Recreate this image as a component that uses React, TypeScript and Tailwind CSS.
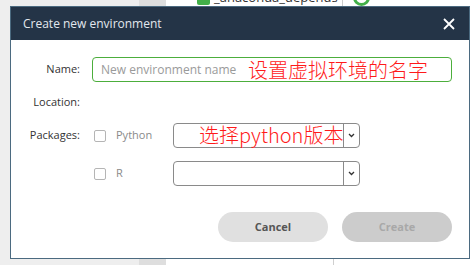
import React from "react";

function Checkbox() {
  return <span className="block w-[12px] h-[12px] border border-[#b5b5b5] rounded-[2px] bg-white" />;
}

function SelectBox({ note }: { note?: string }) {
  return (
    <div className="relative flex h-[25px] w-[187px] border border-[#8a8a8a] rounded-[4px] bg-white">
      <div className="flex-1" />
      <div className="w-[16px] border-l border-[#8a8a8a] flex items-center justify-center">
        <svg width="7" height="5" viewBox="0 0 7 5">
          <path d="M1 1 L3.5 3.5 L6 1" stroke="#333" strokeWidth="1.3" fill="none" />
        </svg>
      </div>
      {note && (
        <span className="absolute left-[25px] top-[-3px] text-[20px] font-light leading-[28px] text-[#ff1a1a] whitespace-nowrap [font-family:'Noto_Sans_CJK_SC','Noto_Sans',sans-serif]">
          {note}
        </span>
      )}
    </div>
  );
}

export default function App() {
  return (
    <div className="relative w-[470px] h-[265px] overflow-hidden [font-family:'Open_Sans','Noto_Sans',sans-serif]">
      {/* background app */}
      <div className="flex h-full">
        <div className="w-[139px] bg-[#eeeeee]" />
        <div className="w-[27px] bg-[#dedede]" />
        <div className="flex-1 bg-white flex flex-col justify-between">
          <div className="flex items-center h-[18px] -mt-[12px] pl-[31px]">
            <span className="w-[13px] h-[15px] bg-[#43b049] rounded-[2px]" />
            <span className="ml-[4px] text-[13px] text-[#333] leading-none">_anaconda_depends</span>
            <span className="ml-[4px] w-px h-[18px] bg-[#ccc]" />
            <span className="ml-[10px] w-[17px] h-[17px] rounded-full border-[3px] border-[#43b049]" />
          </div>
          <div className="h-[7px] ml-[167px] w-px bg-[#cfcfcf]" />
        </div>
      </div>

      {/* dialog */}
      <div className="absolute left-[10px] top-[6px] w-[460px] h-[253px] border border-[#4b6a80] bg-white flex flex-col">
        <div className="h-[33px] bg-[#243447] flex items-center justify-between pl-[12px] pr-[14px]">
          <span className="text-[12px] text-[#e3e8ee]">Create new environment</span>
          <svg width="12" height="12" viewBox="0 0 12 12">
            <path d="M1 1 L11 11 M11 1 L1 11" stroke="#ffffff" strokeWidth="1.8" />
          </svg>
        </div>

        <div className="flex flex-col pt-[17px] pr-[17px] text-[11px] text-[#333]">
          <div className="flex items-center h-[25px]">
            <span className="w-[69px] text-right">Name:</span>
            <div className="relative ml-[12px] flex-1 h-[25px] border border-[#4cae3c] rounded-[4px] flex items-center pl-[8px]">
              <span className="text-[12px] text-[#9a9a9a]">New environment name</span>
              <span className="absolute left-[155px] top-[-2px] text-[20px] font-light leading-[28px] text-[#ff1a1a] whitespace-nowrap [font-family:'Noto_Sans_CJK_SC','Noto_Sans',sans-serif]">
                设置虚拟环境的名字
              </span>
            </div>
          </div>

          <div className="flex items-center h-[25px] mt-[8px]">
            <span className="w-[69px] text-right">Location:</span>
          </div>

          <div className="flex items-center h-[25px] mt-[8px]">
            <span className="w-[69px] text-right">Packages:</span>
            <div className="ml-[14px] flex items-center w-[79px]">
              <Checkbox />
              <span className="ml-[10px] text-[11px] text-[#8a8a8a]">Python</span>
            </div>
            <SelectBox note="选择python版本" />
          </div>

          <div className="flex items-center h-[25px] mt-[13px]">
            <span className="w-[69px]" />
            <div className="ml-[14px] flex items-center w-[79px]">
              <Checkbox />
              <span className="ml-[10px] text-[11px] text-[#8a8a8a]">R</span>
            </div>
            <SelectBox />
          </div>

          <div className="flex justify-end gap-[14px] mt-[26px]">
            <button className="w-[110px] h-[30px] rounded-full bg-[#e0e0e0] text-[11px] font-bold text-[#555]">
              Cancel
            </button>
            <button className="w-[110px] h-[30px] rounded-full bg-[#cccccc] text-[11px] font-bold text-[#a8a8a8]">
              Create
            </button>
          </div>
        </div>
      </div>
    </div>
  );
}
